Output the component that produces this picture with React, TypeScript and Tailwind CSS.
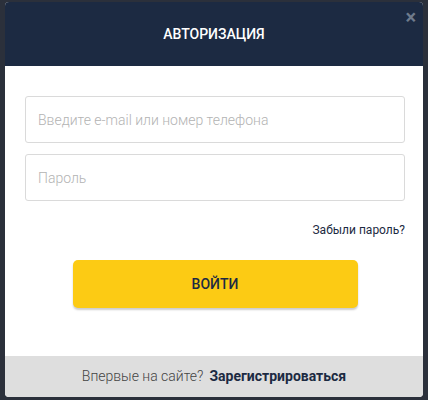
export default function App() {
  return (
    <div className="h-[400px] w-[428px] overflow-hidden bg-[#2b303b] px-[5px] pt-[2px] font-['Roboto',sans-serif]">
      <div className="relative flex h-[395px] flex-col overflow-hidden rounded-[4px] bg-white">
        {/* шапка */}
        <div className="flex h-[64px] shrink-0 items-center justify-center bg-[#1c2a42]">
          <h2 className="text-[14px] font-medium text-white">АВТОРИЗАЦИЯ</h2>
        </div>
        <button className="absolute right-[7px] top-[5px] text-[20px] font-bold leading-none text-[#6f7b8c]">
          ×
        </button>

        <div className="flex flex-1 flex-col pl-[20px] pr-[18px] pt-[30px]">
          <input
            className="h-[47px] w-full rounded-[3px] border border-[#dadada] px-[12px] text-[14px] font-light outline-none placeholder:text-[#b3b3b3]"
            placeholder="Введите e-mail или номер телефона"
          />
          <input
            type="password"
            className="mt-[11px] h-[47px] w-full rounded-[3px] border border-[#dadada] px-[12px] text-[14px] font-light outline-none placeholder:text-[#b3b3b3]"
            placeholder="Пароль"
          />
          <div className="mt-[20px] flex justify-end">
            <a className="text-[12px] text-[#1c2a42]">Забыли пароль?</a>
          </div>
          <div className="mt-[21px] flex justify-center">
            <button className="h-[48px] w-[285px] rounded-[5px] bg-[#fccb14] text-[14px] font-medium text-[#1c2a42] shadow-[0_2px_2px_rgba(0,0,0,0.2)]">
              ВОЙТИ
            </button>
          </div>
        </div>

        {/* подвал */}
        <div className="flex h-[41px] shrink-0 items-center justify-center gap-[6px] bg-[#dedede] text-[14px]">
          <span className="font-light text-[#444]">Впервые на сайте?</span>
          <a className="font-bold text-[#1c2a42]">Зарегистрироваться</a>
        </div>
      </div>
    </div>
  );
}
